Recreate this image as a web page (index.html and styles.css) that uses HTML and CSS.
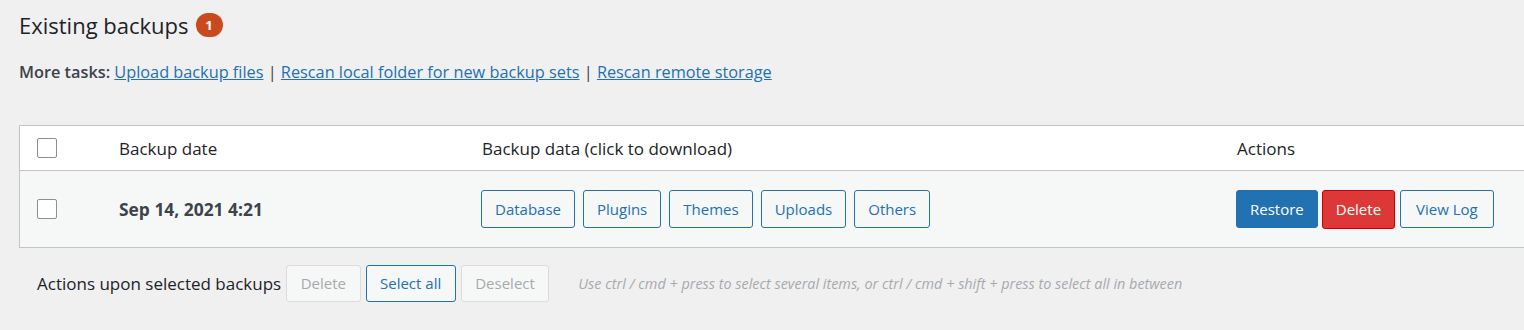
FILE: index.html
```html
<!DOCTYPE html>
<html>
<head>
<meta charset="utf-8">
<link rel="stylesheet" href="styles.css">
</head>
<body>
<div class="page">
  <h2 class="title">Existing backups <span class="count">1</span></h2>
  <p class="tasks"><strong>More tasks:</strong> <a href="#">Upload backup files</a> | <a href="#">Rescan local folder for new backup sets</a> | <a href="#">Rescan remote storage</a></p>

  <div class="table">
    <div class="row head">
      <div class="cell check"><span class="box"></span></div>
      <div class="cell">Backup date</div>
      <div class="cell">Backup data (click to download)</div>
      <div class="cell">Actions</div>
    </div>
    <div class="row body">
      <div class="cell check"><span class="box"></span></div>
      <div class="cell date">Sep 14, 2021 4:21</div>
      <div class="cell btns">
        <button class="btn">Database</button>
        <button class="btn">Plugins</button>
        <button class="btn">Themes</button>
        <button class="btn">Uploads</button>
        <button class="btn">Others</button>
      </div>
      <div class="cell btns actions">
        <button class="btn primary">Restore</button>
        <button class="btn danger">Delete</button>
        <button class="btn log">View Log</button>
      </div>
    </div>
  </div>

  <div class="bulk">
    <span class="bulk-label">Actions upon selected backups</span>
    <button class="btn disabled wide">Delete</button>
    <button class="btn sel">Select all</button>
    <button class="btn disabled">Deselect</button>
    <em class="hint">Use ctrl / cmd + press to select several items, or ctrl / cmd + shift + press to select all in between</em>
  </div>
</div>
</body>
</html>
```

FILE: styles.css
```css
html, body {
  margin: 0;
  padding: 0;
  background: #f0f0f1;
  overflow: hidden;
}
body {
  font-family: "Open Sans", "Noto Sans", sans-serif;
  color: #3c434a;
  font-size: 16px;
}
.page {
  padding: 0 0 0 19px;
}
.title {
  margin: 0;
  padding-top: 9px;
  font-size: 22px;
  font-weight: 500;
  color: #1d2327;
  line-height: 32px;
  display: flex;
  align-items: center;
  gap: 7px;
}
.count {
  display: inline-flex;
  align-items: center;
  justify-content: center;
  width: 27px;
  height: 24px;
  border-radius: 12px;
  background: #ca4a1f;
  color: #fff;
  font-size: 13px;
  font-weight: 700;
}
.tasks {
  margin: 18px 0 0;
  line-height: 26px;
  font-size: 16.3px;
  white-space: nowrap;
}
.tasks strong {
  font-weight: 600;
  color: #3c434a;
}
.tasks a {
  color: #2271b1;
}
.table {
  margin-top: 40px;
  width: 1540px;
  border: 1px solid #c3c4c7;
  background: #fff;
}
.row {
  display: grid;
  grid-template-columns: 99px 363px 755px 1fr;
  align-items: center;
}
.row.head {
  height: 44px;
  background: #fff;
  border-bottom: 1px solid #c3c4c7;
  color: #1d2327;
  font-weight: 500;
  font-size: 17px;
}
.row.body {
  height: 76px;
  background: #f6f7f7;
}
.cell.check {
  padding-left: 17px;
  display: flex;
}
.box {
  width: 18px;
  height: 18px;
  border: 1px solid #8c8f94;
  border-radius: 2px;
  background: #fff;
}
.date {
  font-weight: 700;
  font-size: 17.4px;
  color: #3c434a;
}
.btns {
  display: flex;
  gap: 8px;
  margin-left: -1px;
}
.btn {
  flex-shrink: 0;
  white-space: nowrap;
  font-family: inherit;
  font-size: 15px;
  height: 38px;
  padding: 0 13px;
  border: 1px solid #2271b1;
  border-radius: 3px;
  background: #f6f7f7;
  color: #2271b1;
  line-height: 36px;
}
.actions {
  gap: 4px;
}
.btn.log {
  margin-left: 1px;
  padding: 0 15px;
}
.btn.primary {
  background: #2271b1;
  color: #fff;
}
.btn.danger {
  background: #dc3838;
  border-color: #c00;
  color: #fff;
  height: 39px;
}
.bulk {
  display: flex;
  align-items: center;
  padding: 17px 0 0 18px;
}
.bulk-label {
  color: #1d2327;
  font-size: 17px;
  margin-right: 5px;
}
.bulk .btn {
  margin-right: 5px;
  height: 37px;
  line-height: 35px;
  padding: 0 13.5px;
}
.btn.wide {
  min-width: 74px;
}
.btn.disabled {
  color: #a7aaad;
  border-color: #dcdcde;
  background: #f6f7f7;
}
.btn.sel {
  background: #f6f7f7;
}
.hint {
  margin-left: 24px;
  font-size: 14.4px;
  color: #a7aaad;
  white-space: nowrap;
}
```
